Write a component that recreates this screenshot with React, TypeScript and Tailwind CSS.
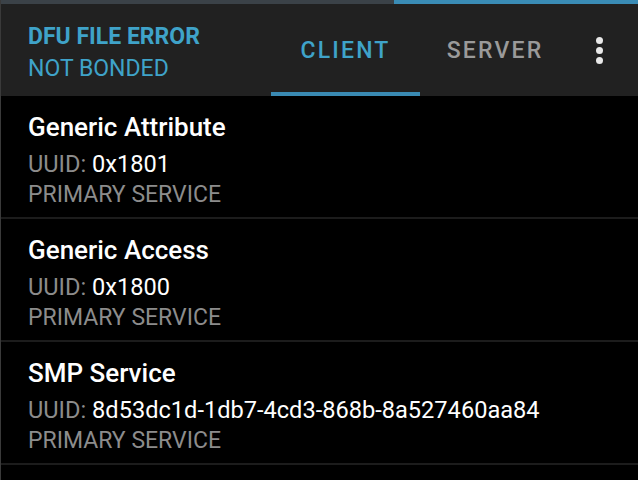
import type { ReactNode } from "react";

const services = [
  { name: "Generic Attribute", uuid: "0x1801" },
  { name: "Generic Access", uuid: "0x1800" },
  { name: "SMP Service", uuid: "8d53dc1d-1db7-4cd3-868b-8a527460aa84" },
];

function ServiceRow({ name, uuid }: { name: string; uuid: string }): ReactNode {
  return (
    <div className="h-[123px] border-b-2 border-[#1c1c1c] pl-[27px] pt-[14px]">
      <div className="text-[26px] leading-[34px] font-medium text-white">{name}</div>
      <div className="mt-[5px] text-[23.6px] leading-[30px] text-white">
        <span className="text-[#8c8c8c]">UUID: </span>
        {uuid}
      </div>
      <div className="mt-[1px] text-[23px] leading-[30px] text-[#8c8c8c]">PRIMARY SERVICE</div>
    </div>
  );
}

export default function App(): ReactNode {
  return (
    <div
      className="w-[638px] h-[480px] overflow-hidden bg-black border-l border-[#3a3a3a]"
      style={{ fontFamily: "Roboto, 'Noto Sans', sans-serif" }}
    >
      <div className="flex h-[4px]">
        <div className="w-[393px] bg-[#3b4248]" />
        <div className="flex-1 bg-[#3a8cb6]" />
      </div>
      <div className="flex h-[92px] bg-[#212121]">
        <div className="w-[270px] pl-[27px] pt-[19px]">
          <div className="text-[23px] leading-[28px] font-bold text-[#3fa3c9]">DFU FILE ERROR</div>
          <div className="mt-[2px] text-[23px] leading-[32px] text-[#3fa3c9]">NOT BONDED</div>
        </div>
        <div className="relative flex w-[149px] items-center justify-center pt-[3px]">
          <span className="text-[23px] font-medium tracking-[2.2px] text-[#3fa3c9]">CLIENT</span>
          <div className="absolute bottom-0 left-0 right-0 h-[4px] bg-[#3a8ab3]" />
        </div>
        <div className="flex w-[150px] items-center justify-center pt-[3px]">
          <span className="text-[23px] font-medium tracking-[2.2px] text-[#9a9a9a]">SERVER</span>
        </div>
        <div className="flex w-[58px] flex-col items-center justify-center gap-[3px]">
          <div className="h-[7px] w-[7px] rounded-full bg-[#e8e8e8]" />
          <div className="h-[7px] w-[7px] rounded-full bg-[#e8e8e8]" />
          <div className="h-[7px] w-[7px] rounded-full bg-[#e8e8e8]" />
        </div>
      </div>
      {services.map((s) => (
        <ServiceRow key={s.name} name={s.name} uuid={s.uuid} />
      ))}
    </div>
  );
}
